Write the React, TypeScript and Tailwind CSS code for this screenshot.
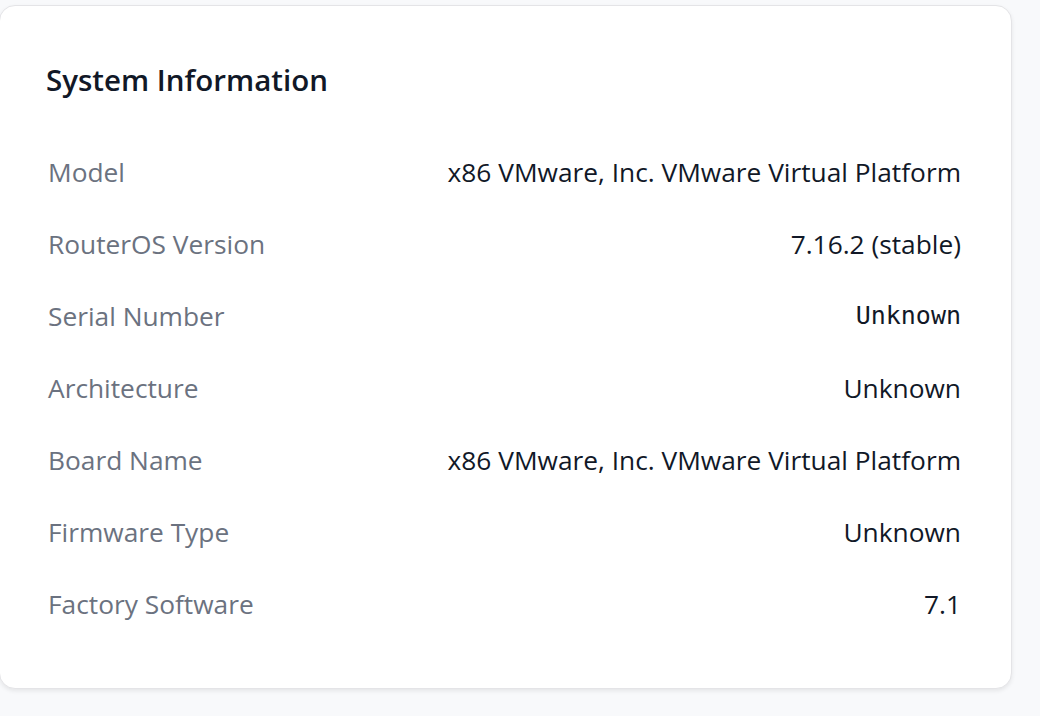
const rows: { label: string; value: string; mono?: boolean }[] = [
    { label: "Model", value: "x86 VMware, Inc. VMware Virtual Platform" },
    { label: "RouterOS Version", value: "7.16.2 (stable)" },
    { label: "Serial Number", value: "Unknown", mono: true },
    { label: "Architecture", value: "Unknown" },
    { label: "Board Name", value: "x86 VMware, Inc. VMware Virtual Platform" },
    { label: "Firmware Type", value: "Unknown" },
    { label: "Factory Software", value: "7.1" },
]

export default function App() {
    return (
        <div className="min-h-screen bg-[#f8f9fb] pt-[5px] font-['Open_Sans',sans-serif]">
            <div className="ml-[-1px] w-[1013px] rounded-[16px] border border-[#e4e4e7] bg-white pl-[48px] pr-[50px] pb-[48px] pt-[56px] shadow-[0_2px_4px_rgba(0,0,0,0.08)]">
                <h2 className="mb-[38px] ml-[-2px] text-[29.5px] font-semibold leading-[36px] text-[#111827]">System Information</h2>
                <div>
                    {rows.map((row) => (
                        <div key={row.label} className="flex items-center justify-between py-[18px]">
                            <span className="text-[26.3px] leading-[36px] text-[#6b7280]">{row.label}</span>
                            <span
                                className={
                                    row.mono
                                        ? "font-['DejaVu_Sans_Mono',monospace] text-[25px] leading-[36px] text-[#111827]"
                                        : "text-[26.3px] leading-[36px] text-[#111827]"
                                }
                            >
                                {row.value}
                            </span>
                        </div>
                    ))}
                </div>
            </div>
        </div>
    )
}
